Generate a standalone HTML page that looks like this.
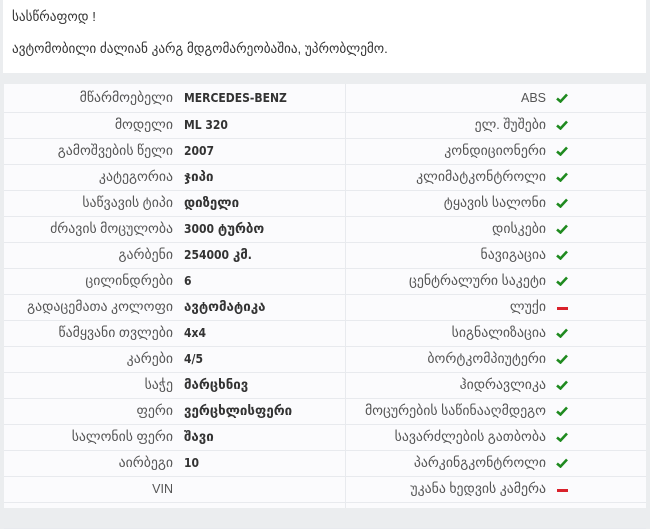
<!DOCTYPE html>
<html><head><meta charset="utf-8"><style>
html,body{margin:0;padding:0;width:650px;height:508px;overflow:hidden;background:#ebedef;font-family:"Liberation Sans","DejaVu Sans",sans-serif;font-size:12.5px;color:#444}
.top{position:absolute;left:3px;top:0;width:643px;height:73px;background:#fff}
.top p{margin:0;position:absolute;left:9px;font-size:13.2px;color:#333}
.tbl{position:absolute;left:4px;top:84px;width:642px;height:424px;background:#fbfbfd}
.row{position:absolute;left:0;width:642px;height:26px;border-bottom:1px solid #e8eaee;box-sizing:border-box}
.col{position:absolute;top:0;height:26px;line-height:25px;white-space:nowrap}
.l{right:473px;text-align:right;color:#555}
.v{left:180px;font-weight:bold;color:#333;font-family:"DejaVu Sans Condensed","DejaVu Sans",sans-serif;font-size:12px}
.r{right:100px;text-align:right;color:#555}
.ic{left:552px;width:14px}
.sep{position:absolute;left:341px;top:0;width:1px;height:424px;background:#e8eaee}
.g{font-size:13.8px;font-family:"DejaVu Sans",sans-serif}
.v .g{font-size:13.3px}
.mn{position:absolute;top:12px;left:1px;width:11px;height:3px;background:#d9212b}
</style></head><body>
<div class="top">
<p style="top:9px">სასწრაფოდ !</p>
<p style="top:41px">ავტომობილი ძალიან კარგ მდგომარეობაშია, უპრობლემო.</p>
</div>
<div class="tbl"><div class="sep"></div></div>
<script>
var d=[["მწარმოებელი","MERCEDES-BENZ","ABS",1],["მოდელი","ML 320","ელ. შუშები",1],["გამოშვების წელი","2007","კონდიციონერი",1],["კატეგორია","ჯიპი","კლიმატკონტროლი",1],["საწვავის ტიპი","დიზელი","ტყავის სალონი",1],["ძრავის მოცულობა","3000 ტურბო","დისკები",1],["გარბენი","254000 კმ.","ნავიგაცია",1],["ცილინდრები","6","ცენტრალური საკეტი",1],["გადაცემათა კოლოფი","ავტომატიკა","ლუქი",0],["წამყვანი თვლები","4x4","სიგნალიზაცია",1],["კარები","4/5","ბორტკომპიუტერი",1],["საჭე","მარცხნივ","ჰიდრავლიკა",1],["ფერი","ვერცხლისფერი","მოცურების საწინააღმდეგო",1],["სალონის ფერი","შავი","სავარძლების გათბობა",1],["აირბეგი","10","პარკინგკონტროლი",1],["VIN","","უკანა ხედვის კამერა",0],["","","",2]];
function w(s){return s.replace(/([\u10A0-\u10FF]+)/g,'<span class="g">$1</span>');}
var t=document.querySelector('.tbl'),h='';
var ck='<svg width="12" height="10" viewBox="0 0 12 10" style="vertical-align:-1px"><path d="M1 5.5L4.5 8.5L11 1.5" stroke="#1f8a1f" stroke-width="2.6" fill="none"/></svg>';
d.forEach(function(r,i){var y=i==0?0:29+(i-1)*26;var st=i==0?'top:'+y+'px;height:29px':'top:'+y+'px';var off=i==0?'style="top:2px"':'';
var ic=r[3]==1?ck:(r[3]==0?'<div class="mn"></div>':'');
h+='<div class="row" style="'+st+'"><div class="col l" '+off+'>'+w(r[0])+'</div><div class="col v" '+off+'>'+w(r[1])+'</div><div class="col r" '+off+'>'+w(r[2])+'</div><div class="col ic" '+off+'>'+ic+'</div></div>';});
t.insertAdjacentHTML('beforeend',h);
</script>
</body></html>
